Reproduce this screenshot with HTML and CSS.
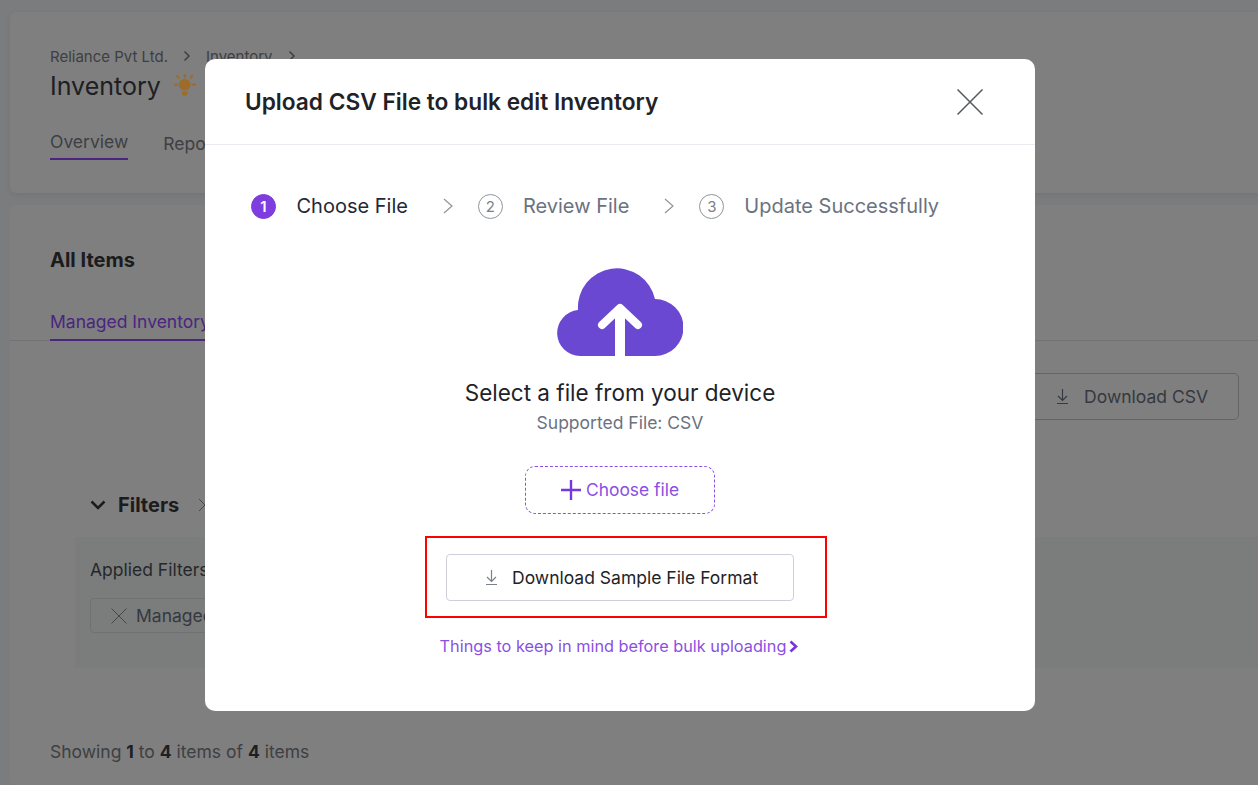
FILE: index.html
```html
<!DOCTYPE html>
<html lang="en">
<head>
    <meta charset="UTF-8">
    <title>Inventory</title>
    <link rel="stylesheet" href="styles.css">
</head>
<body>
    <div class="page">
        <div class="card head-card">
            <div class="crumbs">
                <span>Reliance Pvt Ltd.</span>
                <svg class="crumb-arrow" viewBox="0 0 8 12"><path d="M1.5 1.5 6 6l-4.500 4.500"/></svg>
                <span>Inventory</span>
                <svg class="crumb-arrow" viewBox="0 0 8 12"><path d="M1.500 1.500 6 6l-4.500 4.500"/></svg>
            </div>
            <div class="title-row">
                <h1>Inventory</h1>
                <svg class="bulb" viewBox="0 0 22 22">
                    <circle cx="10.700" cy="10.700" r="5.800" fill="#9c6c28"/>
                    <path d="M7.500 17.500h6.500l-0.800 3a1.500 1.500 0 0 1-1.400 1h-2.100a1.500 1.500 0 0 1-1.400-1z" fill="#9c6c28"/>
                    <path d="M10.700 1v2.200M3.400 2.200l1 1.500M18 2.200l-1 1.500M0.500 10.700h2.500M18.500 10.700h2.500" stroke="#9c6c28" stroke-width="2.200" stroke-linecap="round"/>
                </svg>
            </div>
            <div class="tabs">
                <div class="tab tab-on">Overview</div>
                <div class="tab tab-low">Reports</div>
            </div>
        </div>

        <div class="card items-card">
            <h2>All Items</h2>
            <div class="item-tabs">
                <div class="tab-purple">Managed Inventory</div>
            </div>
            <div class="toolbar">
                <button class="csv-btn">
                    <svg class="dl-icon" viewBox="0 0 13 15"><path d="M6.500 0v11M2 7l4.500 4.500L11 7M1 14.500h11"/></svg>
                    Download CSV
                </button>
            </div>
            <div class="filter-head">
                <svg class="filter-chev" viewBox="0 0 16 10"><path d="M1.500 1.500 8 8l6.500-6.500"/></svg>
                <span class="filter-name">Filters</span>
                <svg class="filter-x" viewBox="0 0 14 14"><path d="M1 1l12 12M13 1 1 13"/></svg>
            </div>
            <div class="filter-panel">
                <div class="applied">Applied Filters</div>
                <div class="chip">
                    <svg class="chip-x" viewBox="0 0 16 16"><path d="M0.500 0.500l15 15M15.500 0.500l-15 15"/></svg>
                    Managed Inventory
                </div>
            </div>
            <div class="showing">Showing <b>1</b> to <b>4</b> items of <b>4</b> items</div>
        </div>
    </div>

    <!-- Modal de upload -->
    <div class="overlay">
        <div class="modal">
            <div class="modal-head">
                <div class="modal-title">Upload CSV File to bulk edit Inventory</div>
                <svg class="modal-close" viewBox="0 0 26 26"><path d="M0.500 0.500l25 25M25.500 0.500l-25 25"/></svg>
            </div>
            <div class="modal-body">
                <div class="steps">
                    <span class="step-num step-active">1</span>
                    <span class="step-label step-label-active">Choose File</span>
                    <svg class="step-arrow" viewBox="0 0 10 16"><path d="M1 1l8 7-8 7"/></svg>
                    <span class="step-num">2</span>
                    <span class="step-label">Review File</span>
                    <svg class="step-arrow" viewBox="0 0 10 16"><path d="M1 1l8 7-8 7"/></svg>
                    <span class="step-num">3</span>
                    <span class="step-label">Update Successfully</span>
                </div>
                <div class="upload">
                    <svg class="cloud" viewBox="0 0 126 88">
                        <path d="M23 88A23 23 0 0 1 21 42.100A39 39 0 0 1 98 31A28.500 28.500 0 0 1 98 88Z" fill="#6b48d1"/>
                        <path d="M63 88V42" stroke="#fff" stroke-width="10"/>
                        <path d="M45 57 63 40 81 57" stroke="#fff" stroke-width="8" stroke-linecap="round" stroke-linejoin="round" fill="none"/>
                    </svg>
                    <div class="select-text">Select a file from your device</div>
                    <div class="supported">Supported File: CSV</div>
                    <button class="choose-btn">
                        <svg class="plus" viewBox="0 0 20 20"><path d="M10 0v20M0 10h20"/></svg>
                        Choose file
                    </button>
                    <div class="highlight">
                        <button class="sample-btn">
                            <svg class="dl-icon dl-grey" viewBox="0 0 13 15"><path d="M6.500 0v11M2 7l4.500 4.500L11 7M1 14.500h11"/></svg>
                            Download Sample File Format
                        </button>
                    </div>
                    <div class="keep-link">
                        Things to keep in mind before bulk uploading
                        <svg class="keep-arrow" viewBox="0 0 9 13"><path d="M1.500 1.500 7 6.500l-5.500 5"/></svg>
                    </div>
                </div>
            </div>
        </div>
    </div>
</body>
</html>
```

FILE: styles.css
```css
body {
    margin: 0;
    height: 785px;
    overflow: hidden;
    font-family: Inter, "Liberation Sans", sans-serif;
    background-color: #f6f9fb;
    color: #000;
}

svg {
    display: block;
    flex: none;
}

.page {
    padding: 12px 0 0 10px;
}

.card {
    background-color: white;
    border-radius: 6px 0 0 6px;
    padding-left: 40px;
}

.head-card {
    height: 181px;
    padding-top: 35px;
    box-sizing: border-box;
    box-shadow: 0 2px 6px rgba(0, 0, 0, 0.08);
    margin-bottom: 12px;
}

.crumbs {
    display: flex;
    align-items: center;
    gap: 15px;
    height: 18px;
    font-size: 15px;
    color: #7b7f87;
}

.crumb-arrow {
    width: 8px;
    height: 12px;
}

.crumb-arrow path {
    fill: none;
    stroke: #7b7f87;
    stroke-width: 1.500;
}

.title-row {
    display: flex;
    align-items: center;
    gap: 13px;
    margin-top: 3px;
    height: 36px;
}

h1 {
    margin: 0;
    font-size: 25px;
    font-weight: 400;
    color: #3f3f46;
}

/* fica acima do overlay, a cor ja vem escurecida */
.bulb {
    position: relative;
    z-index: 1;
    width: 22px;
    height: 22px;
    margin-bottom: 2px;
}

.tabs {
    display: flex;
    gap: 35px;
    margin-top: 26px;
    font-size: 17.500px;
    color: #7b7f87;
}

.tab {
    height: 30px;
    line-height: 24px;
    box-sizing: border-box;
}

.tab-on {
    border-bottom: 2px solid #964aff;
}

.tab-low {
    padding-top: 2px;
}

.items-card {
    height: 580px;
    padding-top: 41px;
    box-sizing: border-box;
    background-color: white;
}

h2 {
    margin: 0;
    font-size: 20px;
    line-height: 28px;
    font-weight: 700;
    color: #38383c;
}

.item-tabs {
    margin-top: 25px;
    margin-left: -40px;
    padding-left: 40px;
    height: 42px;
    box-sizing: border-box;
    border-bottom: 1px solid #e5e5e8;
}

.tab-purple {
    display: inline-block;
    height: 42px;
    box-sizing: border-box;
    padding-top: 11px;
    font-size: 17.500px;
    line-height: 24px;
    color: #964aff;
    border-bottom: 2px solid #964aff;
}

.toolbar {
    display: flex;
    justify-content: flex-end;
    margin-top: 32px;
    padding-right: 19px;
}

.csv-btn {
    display: flex;
    align-items: center;
    justify-content: flex-end;
    gap: 15px;
    width: 400px;
    height: 47px;
    padding: 0 30px 1px 0;
    background: transparent;
    border: 1px solid #c6c8cf;
    border-radius: 5px;
    font-family: inherit;
    font-size: 17.500px;
    color: #6b7280;
}

.dl-icon {
    width: 13px;
    height: 15px;
}

.dl-icon path {
    fill: none;
    stroke: #6b7280;
    stroke-width: 1.200;
}

.dl-icon.dl-grey path {
    stroke: #7b7f87;
}

.filter-head {
    display: flex;
    align-items: center;
    margin-top: 71px;
    margin-left: 40px;
    height: 28px;
}

.filter-chev {
    width: 16px;
    height: 10px;
}

.filter-chev path {
    fill: none;
    stroke: #38383c;
    stroke-width: 2.500;
}

.filter-name {
    margin-left: 12px;
    font-size: 20px;
    font-weight: 700;
    color: #38383c;
}

.filter-x {
    width: 14px;
    height: 14px;
    margin-left: 19px;
}

.filter-x path {
    fill: none;
    stroke: #8b8f97;
}

.filter-panel {
    margin-top: 18px;
    margin-left: 25px;
    height: 131px;
    padding: 21px 0 0 15px;
    box-sizing: border-box;
    background-color: #f7faf9;
}

.applied {
    font-size: 17.500px;
    line-height: 24px;
    color: #4b4f56;
}

.chip {
    display: flex;
    align-items: center;
    gap: 9px;
    width: 300px;
    height: 35px;
    margin-top: 16px;
    padding-left: 20px;
    box-sizing: border-box;
    border: 1px solid #e1e3e6;
    border-radius: 4px;
    font-size: 17.500px;
    color: #6b7280;
}

.chip-x {
    width: 16px;
    height: 16px;
}

.chip-x path {
    fill: none;
    stroke: #8b8f97;
}

.showing {
    margin-top: 72px;
    font-size: 17.500px;
    line-height: 24px;
    color: #7b7f87;
}

.showing b {
    color: #3f3f46;
    font-weight: 700;
}

.overlay {
    position: fixed;
    top: 0;
    left: 0;
    width: 100%;
    height: 100%;
    background-color: rgba(0, 0, 0, 0.5);
}

.modal {
    width: 830px;
    height: 652px;
    margin: 59px 0 0 205px;
    background-color: white;
    border-radius: 10px;
}

.modal-head {
    display: flex;
    align-items: center;
    justify-content: space-between;
    height: 86px;
    padding: 0 52px 0 40px;
    box-sizing: border-box;
    border-bottom: 1px solid #eaebf0;
}

.modal-title {
    font-size: 22.700px;
    font-weight: 600;
    color: #1f2328;
}

.modal-close {
    width: 26px;
    height: 26px;
}

.modal-close path {
    fill: none;
    stroke: #555960;
    stroke-width: 1.500;
}

.modal-body {
    padding-top: 48px;
}

.steps {
    display: flex;
    align-items: center;
    height: 26px;
    padding-left: 46px;
}

.step-num {
    width: 25px;
    height: 25px;
    box-sizing: border-box;
    border: 1px solid #8f949d;
    border-radius: 50%;
    text-align: center;
    font-size: 15px;
    line-height: 23px;
    color: #7b7f87;
}

.step-active {
    background-color: #7e3ddf;
    border-color: #7e3ddf;
    color: white;
    font-weight: 600;
}

.step-label {
    margin-left: 20px;
    font-size: 20px;
    color: #6b7280;
}

.step-label-active {
    margin-left: 20.500px;
    color: #1f2937;
}

.step-arrow {
    width: 10px;
    height: 16px;
    margin: 0 25px 0 35px;
}

.step-arrow path {
    fill: none;
    stroke: #8f949d;
    stroke-width: 1.200;
}

.upload {
    display: flex;
    flex-direction: column;
    align-items: center;
    margin-top: 49px;
}

.cloud {
    width: 126px;
    height: 88px;
}

.select-text {
    margin-top: 21px;
    font-size: 22.500px;
    line-height: 32px;
    color: #1f2328;
}

.supported {
    margin-top: 2px;
    font-size: 17.500px;
    line-height: 24px;
    color: #6b7280;
}

.choose-btn {
    display: flex;
    align-items: center;
    justify-content: center;
    gap: 5px;
    width: 190px;
    height: 48px;
    margin-top: 31px;
    padding: 0 0 1px;
    background: white;
    border: 1px dashed #8a4fe3;
    border-radius: 10px;
    font-family: inherit;
    font-size: 17.400px;
    color: #8a4fe3;
}

.plus {
    width: 20px;
    height: 20px;
}

.plus path {
    fill: none;
    stroke: #7638dd;
    stroke-width: 2.400;
}

.highlight {
    margin: 22px 0 0 12px;
    padding: 16px 31px 15px 19px;
    border: 2px solid #f00;
}

.sample-btn {
    display: flex;
    align-items: center;
    gap: 14px;
    width: 348px;
    height: 47px;
    padding: 0 0 1px 38px;
    box-sizing: border-box;
    background: white;
    border: 1px solid #cdd0da;
    border-radius: 4px;
    font-family: inherit;
    font-size: 17.500px;
    color: #1f2328;
}

.keep-link {
    display: flex;
    align-items: center;
    gap: 3px;
    margin: 16px 2px 0 0;
    font-size: 16.300px;
    line-height: 24px;
    color: #8a4fe3;
}

.keep-arrow {
    width: 9px;
    height: 13px;
}

.keep-arrow path {
    fill: none;
    stroke: #7638dd;
    stroke-width: 2.600;
}
```
